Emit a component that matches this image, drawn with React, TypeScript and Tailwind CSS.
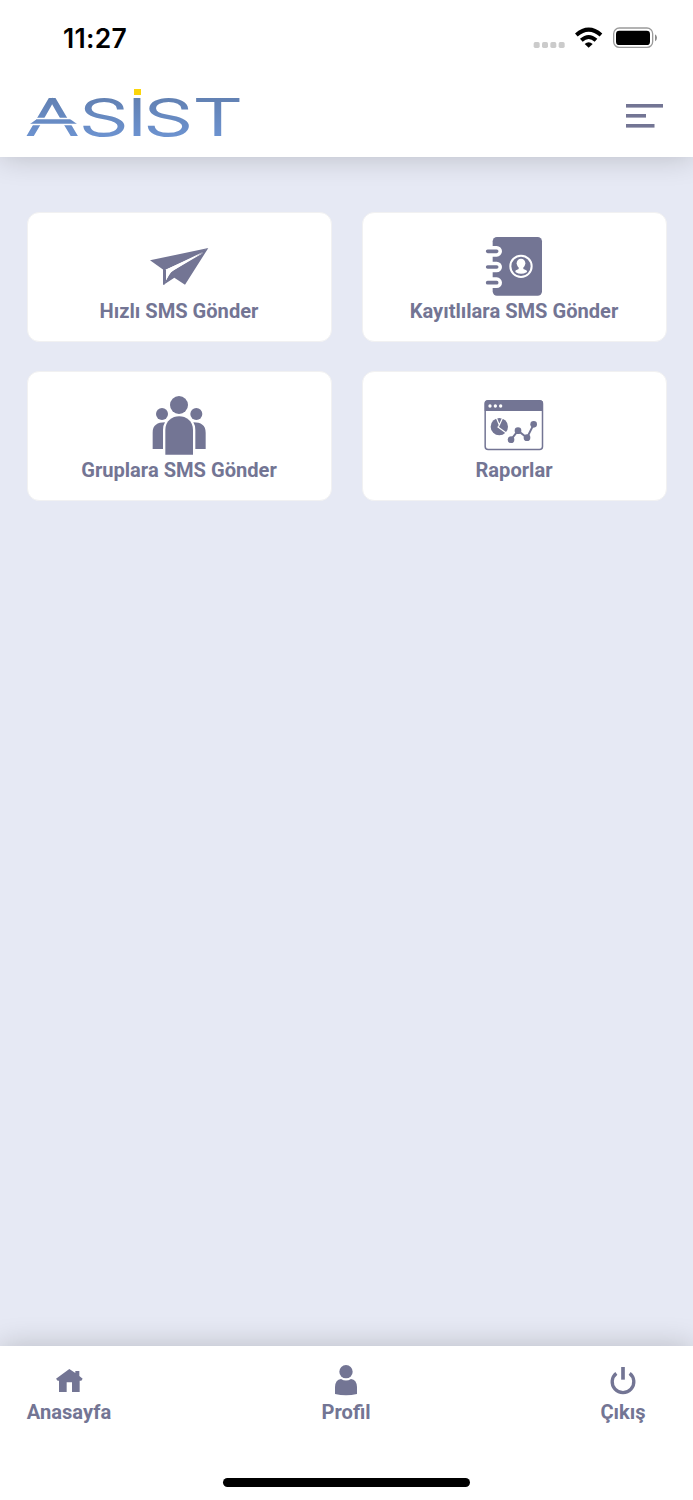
import React from 'react';

const PlaneIcon: React.FC = () => (
  <svg viewBox="42 18 180 180" className="h-15 w-15 fill-[#737594]">
    <path d="M45 91 220 54 197 66 86 120Z" />
    <path d="M84 116 93 119V153L88 164H84Z" />
    <path d="M220 54 150 164 118 143 86 164 100 138Q104 127 116 121L206 68 84 122 84 112Z" />
    <path d="M93 119 206 65 116 121Q106 126 101 137L93 151Z" className="fill-white" />
  </svg>
);

const ContactsIcon: React.FC = () => (
  <svg viewBox="42 33 180 180" className="h-15 w-15 fill-[#737594]">
    <rect x="68" y="36" width="148" height="176" rx="13" />
    <g className="fill-none stroke-white" strokeWidth="32" strokeLinecap="round">
      <path d="M54 79H80M54 126H80M54 173H80" />
    </g>
    <g className="fill-none stroke-[#737594]" strokeWidth="11" strokeLinecap="round">
      <path d="M53 79H80M53 126H80M53 173H80" />
    </g>
    <circle cx="153" cy="124" r="32" className="fill-none stroke-white" strokeWidth="6" />
    <ellipse cx="153" cy="115" rx="13" ry="14" className="fill-white" />
    <path d="M146 124H160V132L169 136Q173 139 170 142Q153 151 137 142Q134 138 138 136L146 132Z" className="fill-white" />
  </svg>
);

const GroupIcon: React.FC = () => (
  <svg viewBox="42 30 180 180" className="h-15 w-15 fill-[#737594]">
    <circle cx="132" cy="60" r="27" />
    <circle cx="81" cy="87" r="18" />
    <circle cx="184" cy="87" r="18" />
    <path d="M91 209V135C91 80 174 80 174 135V209Z" />
    <path d="M53 192V143C53 121 67 112 90 112Q84 121 84 135V192Z" />
    <path d="M212 192V143C212 121 198 112 175 112Q181 121 181 135V192Z" />
  </svg>
);

const ReportIcon: React.FC = () => (
  <svg viewBox="42 30 180 180" className="h-15 w-15 fill-[#737594]">
    <rect x="45.500" y="47.500" width="172" height="146" rx="9" className="fill-none stroke-[#737594]" strokeWidth="4.500" />
    <path d="M44 78V56Q44 46 54 46H209Q219 46 219 56V78Z" />
    <g className="fill-white">
      <circle cx="60" cy="63" r="5" />
      <circle cx="76" cy="63" r="5" />
      <circle cx="92" cy="63" r="5" />
    </g>
    <circle cx="88" cy="125" r="26" />
    <path d="M79 98 88 120 98 98M88 120 84 126 109 144" className="fill-none stroke-white" strokeWidth="3.500" />
    <path d="M123 164 144 137 171 158 191 118" className="fill-none stroke-[#737594]" strokeWidth="6" />
    <circle cx="123" cy="164" r="10" />
    <circle cx="144" cy="137" r="10" />
    <circle cx="171" cy="158" r="10" />
    <circle cx="191" cy="118" r="10" />
  </svg>
);

const HomeIcon: React.FC = () => (
  <svg viewBox="159 135 96 96" className="h-8 w-8 fill-[#737594]">
    <path d="M208 147 226 159V153H238V168L248 176 244 182H239V216H216V187H200V216H177V182H173L168 176Z" />
  </svg>
);

const ProfileIcon: React.FC = () => (
  <svg viewBox="90 105 96 96" className="h-8 w-8 fill-[#737594]">
    <circle cx="138" cy="125" r="20" />
    <path d="M105 192V171Q106 149 123 147Q138 156 153 147Q170 149 171 171V192Q138 200 105 192Z" />
  </svg>
);

const PowerIcon: React.FC = () => (
  <svg viewBox="81 105 96 96" className="h-8 w-8 fill-none stroke-[#737594]" strokeWidth="10">
    <path d="M109 130A32.500 32.500 0 1 0 149 130" />
    <path d="M129 111V149" strokeWidth="11" />
  </svg>
);

const StatusIcons: React.FC = () => (
  <svg viewBox="39 45 375 75" className="h-[25px] w-[125px]">
    <g fill="#cbcbcb">
      <rect x="41" y="96" width="18" height="18" rx="5" />
      <rect x="66" y="96" width="18" height="18" rx="5" />
      <rect x="91" y="96" width="18" height="18" rx="5" />
      <rect x="116" y="96" width="18" height="18" rx="5" />
    </g>
    <path d="M169 75Q206 43 243 75M184 91Q206 71 228 91" fill="none" stroke="#000" strokeWidth="12" />
    <path d="M194 102Q206 91 218 102L206 113Z" />
    <rect x="281" y="54" width="117" height="58" rx="17" fill="none" stroke="#9b9b9b" strokeWidth="4" />
    <rect x="288" y="62" width="102" height="43" rx="10" />
    <path d="M405 73Q411 77 411 83Q411 90 405 94Z" fill="#8b8b8b" />
  </svg>
);

const Logo: React.FC = () => (
  <svg viewBox="0 0 218 52" className="h-[52px] w-[218px] overflow-visible">
    <defs>
      <linearGradient id="logo-blue" x1="0" y1="9" x2="0" y2="47" gradientUnits="userSpaceOnUse">
        <stop offset="0" stopColor="#6281b3" />
        <stop offset="1" stopColor="#6c92cf" />
      </linearGradient>
    </defs>
    <text
      transform="scale(1.6 1)"
      x="0.300 33.400 63.100 73.800 104.600"
      y="45.500"
      fill="url(#logo-blue)"
      stroke="url(#logo-blue)"
      strokeWidth="2"
      className="font-['Inter'] text-[49px] font-extralight"
    >
      ASIST
    </text>
    <path d="M11 30H44L51 35H4Z" fill="url(#logo-blue)" />
    <path d="M9 29.500H45M3 35.500H52" stroke="#fff" strokeWidth="1.300" />
    <rect x="108" y="0" width="7" height="6" fill="#fbd50b" />
  </svg>
);

const MenuIcon: React.FC = () => (
  <svg viewBox="0 0 37 24" className="h-6 w-[37px] fill-[#737594]">
    <rect width="37" height="3.600" />
    <rect y="10" width="20" height="3.600" />
    <rect y="20" width="28.500" height="3.600" />
  </svg>
);

const actions = [
  { label: 'Hızlı SMS Gönder', icon: <PlaneIcon /> },
  { label: 'Kayıtlılara SMS Gönder', icon: <ContactsIcon /> },
  { label: 'Gruplara SMS Gönder', icon: <GroupIcon /> },
  { label: 'Raporlar', icon: <ReportIcon /> },
];

const tabs = [
  { label: 'Anasayfa', icon: <HomeIcon /> },
  { label: 'Profil', icon: <ProfileIcon /> },
  { label: 'Çıkış', icon: <PowerIcon /> },
];

const App: React.FC = () => {
  return (
    <div className="flex h-[1500px] w-full flex-col overflow-hidden bg-[#e6e9f4] font-['Roboto',sans-serif] text-[20.1px] leading-6 font-bold text-[#737594]">
      <header className="h-[157px] shrink-0 bg-white shadow-[0_0_28px_rgba(0,0,0,0.2)]">
        <div className="flex h-[89px] items-start justify-between pr-[35px] pl-[63px]">
          <span className="pt-[22px] font-['Inter',sans-serif] text-[26.5px] leading-8 font-semibold tracking-[0.3px] text-black">11:27</span>
          <div className="pt-[25px]">
            <StatusIcons />
          </div>
        </div>
        <div className="flex items-start justify-between pr-[30px] pl-[26px]">
          <Logo />
          <button type="button" aria-label="Menü" className="pt-[15px]">
            <MenuIcon />
          </button>
        </div>
      </header>

      <main className="grid flex-1 grid-cols-2 content-start gap-x-[30px] gap-y-[29px] px-[26.5px] pt-[55px]">
        {actions.map((action) => (
          <button
            key={action.label}
            type="button"
            className="flex h-[130px] flex-col items-center rounded-xl border border-[#f1f1f2] bg-white pt-[23px]"
          >
            {action.icon}
            <span className="mt-[3px]">{action.label}</span>
          </button>
        ))}
      </main>

      <footer className="flex h-[154px] shrink-0 flex-col justify-between bg-white pt-[19px] pb-[13px] shadow-[0_0_28px_rgba(0,0,0,0.2)]">
        <nav className="flex justify-between pr-[28px] pl-[27px]">
          {tabs.map((tab) => (
            <button key={tab.label} type="button" className="flex w-[84px] flex-col items-center">
              {tab.icon}
              <span className="mt-[3px]">{tab.label}</span>
            </button>
          ))}
        </nav>
        <div className="mx-auto h-[9px] w-[247px] rounded-full bg-black" />
      </footer>
    </div>
  );
};

export default App;
